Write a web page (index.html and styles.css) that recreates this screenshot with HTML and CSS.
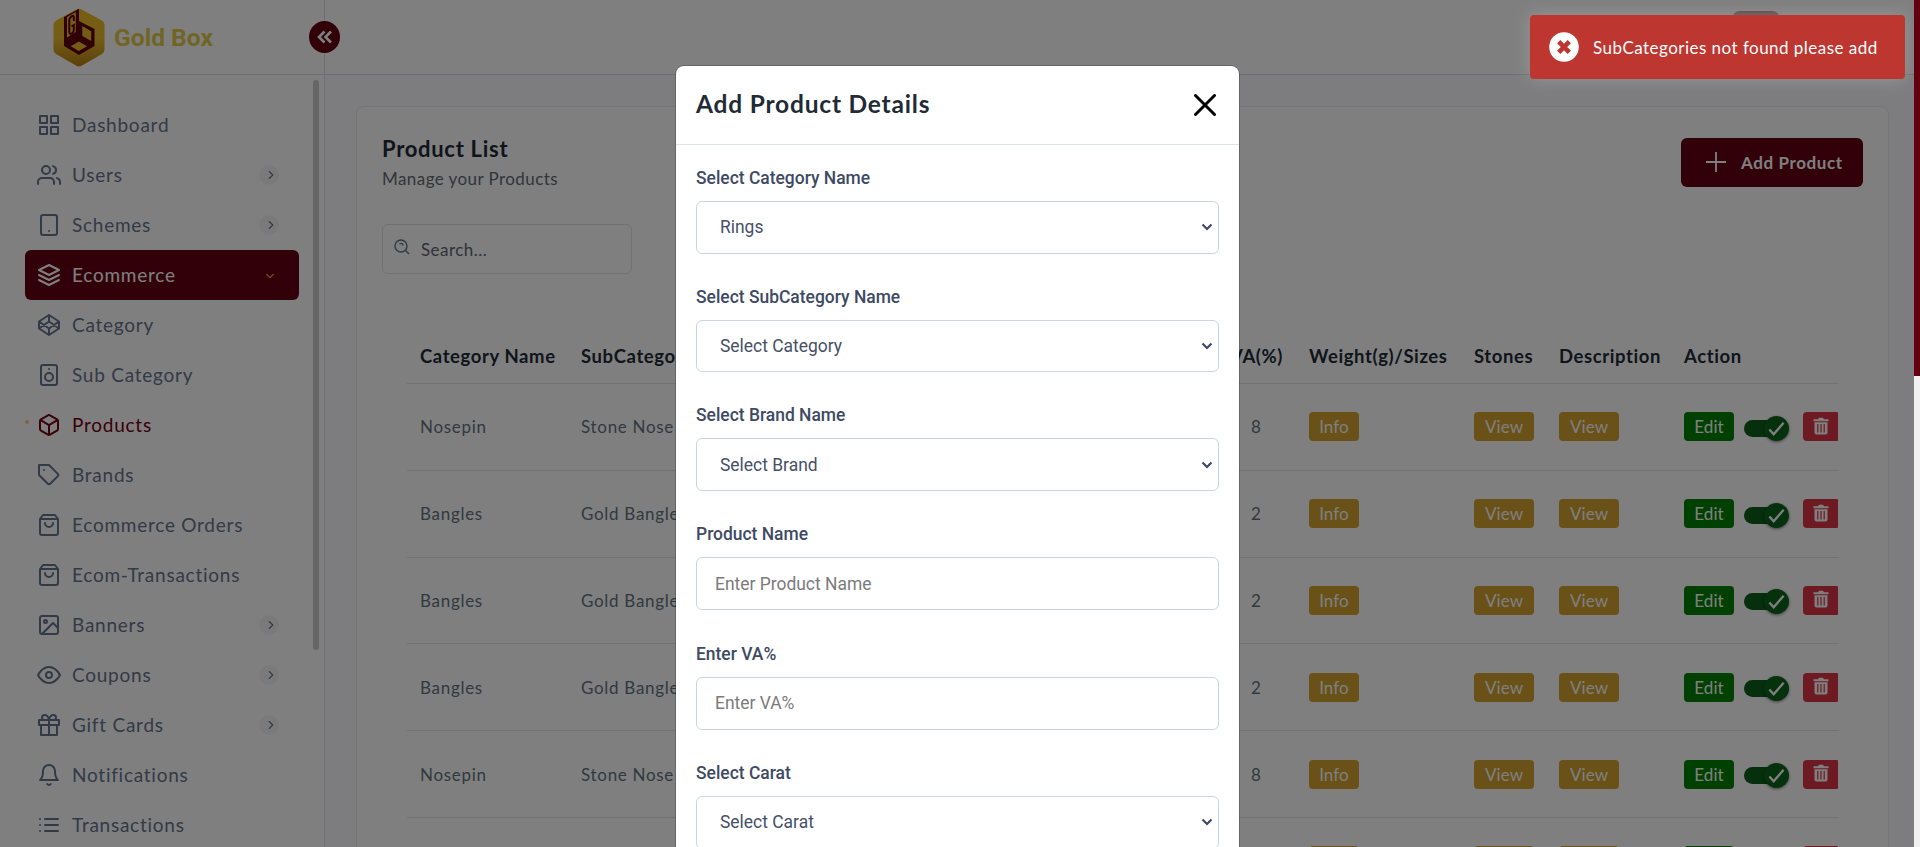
FILE: index.html
```html
<!DOCTYPE html>
<html lang="en">
<head>
<meta charset="utf-8">
<title>Gold Box - Products</title>
<link rel="stylesheet" href="styles.css">
</head>
<body>
<div class="app">
  <div class="viewport">
    <aside class="sidebar">
      <div class="brand">
        <svg class="brand-mark" viewBox="0 0 52 58">
          <defs><linearGradient id="gold" x1="0" y1="0" x2="0" y2="1"><stop offset="0" stop-color="#f0ba20"/><stop offset=".5" stop-color="#e8bc30"/><stop offset="1" stop-color="#b98010"/></linearGradient></defs>
          <path d="M23 1.2Q26 -.6 29 1.2L49 12Q51.500 13.500 51.500 16.500V41Q51.500 44 49 45.500L29 57Q26 58.800 23 57L3 45.500Q.5 44 .5 41V16.500Q.5 13.500 3 12Z" fill="url(#gold)"/>
          <path d="M11 8.500L26 .3V12.500L41.500 20.500V37.500L26 46.500L11 37.500Z" fill="#62000f"/>
          <path d="M14 8.500L22.800 3.500V23.500L14 29Z" fill="#ecba28"/>
          <path d="M20.800 12.500V9Q20.800 6.500 18.600 7.800Q16.300 9 16.300 11.500V23Q16.300 26.500 18.800 25Q20.800 24 20.800 21.500V16.500L18.500 18" stroke="#62000f" stroke-width="2" fill="none"/>
          <path d="M29.300 17.500L38.200 22.800V32.500L29.300 27.500ZM25.800 33L34 37.800L25.800 42.500L17.800 37.800Z" fill="#e8b82c"/>
        </svg>
        <span class="brand-name">Gold Box</span>
      </div>
      <nav class="menu" id="menu"></nav>
      <span class="side-thumb"></span>
      <span class="collapse"><svg viewBox="0 0 16 14"><path d="M7.500 1.500L2 7L7.500 12.500M14 1.500L8.500 7L14 12.500"/></svg></span>
    </aside>
    <div class="main">
      <header class="topbar"><span class="avatar"></span></header>
      <main class="content">
        <section class="card">
          <div class="card-head">
            <div>
              <h1 class="title">Product List</h1>
              <p class="subtitle">Manage your Products</p>
            </div>
            <button class="add"><svg viewBox="0 0 20 20"><path d="M10 0V20M0 10H20"/></svg><span>Add Product</span></button>
          </div>
          <div class="search">
            <svg viewBox="0 0 16 16"><circle cx="7" cy="7" r="6"/><path d="M11.300 11.300L15 15M5.500 4.800Q8.500 3.500 9.300 6.500"/></svg>
            <span>Search...</span>
          </div>
          <div class="table" id="table">
            <div class="row head"><span>Category Name</span><span>SubCategory</span><span class="va">VA(%)</span><span class="weight">Weight(g)/Sizes</span><span>Stones</span><span>Description</span><span>Action</span></div>
          </div>
        </section>
      </main>
    </div>
    <div class="backdrop"></div>
    <div class="modal">
      <div class="modal-head">
        <h2 class="modal-title">Add Product Details</h2>
        <svg class="close" viewBox="0 0 22 22"><path d="M1.500 1.500L20.500 20.500M20.500 1.500L1.500 20.500"/></svg>
      </div>
      <div class="modal-body" id="form"></div>
    </div>
    <div class="toast">
      <svg viewBox="0 0 30 30"><circle cx="15" cy="15" r="14.800" fill="#fff"/><path d="M9.700 9.700L20.300 20.300M20.300 9.700L9.700 20.300" stroke="#bd362f" stroke-width="4.600"/></svg>
      <span>SubCategories not found please add</span>
    </div>
  </div>
  <div class="scrollbar"><span class="scroll-thumb"></span></div>
</div>
<script src="app.js"></script>
</body>
</html>
```
FILE: styles.css
```css
* { box-sizing: border-box; }
body { margin: 0; font-family: Lato, "Open Sans", sans-serif; }
h1, h2, p { margin: 0; }
.app { display: flex; width: 100vw; height: 847px; overflow: hidden; }
.viewport { position: relative; display: flex; flex: 1; min-width: 0; overflow: hidden; background: #fff; }
.sidebar { position: relative; width: 325px; flex: none; border-right: 1px solid #dcdfe4; background: #fff; }
.brand { display: flex; align-items: center; gap: 9px; height: 75px; padding: 1px 0 0 53px; border-bottom: 1px solid #dcdde0; }
.brand-mark { width: 52px; height: 59px; }
.brand-name { font: 700 24.6px/30px Roboto, sans-serif; color: #e2cb4a; }
.menu { padding: 25px 25px 0; }
.item { display: flex; align-items: center; height: 50px; padding: 0 20px 0 12px; border-radius: 6px; color: #67748e; font-size: 19px; letter-spacing: .75px; white-space: nowrap; }
.item > span:not(.chev) { padding-bottom: 2px; }
.item svg { width: 24px; height: 24px; margin-right: 11px; fill: none; stroke: currentColor; stroke-width: 2; stroke-linecap: round; stroke-linejoin: round; }
.item .chev { display: flex; align-items: center; justify-content: center; width: 20px; height: 20px; margin-left: auto; border-radius: 50%; background: #f5f5f6; }
.item .chev svg { width: 14px; height: 14px; margin: -1px -4px 0 0; }
.item.open { background: #620010; color: #fff; }
.item.open .chev { background: none; color: #f09032; }
.item.open .chev svg { margin: 1px -2px 0 0; transform: rotate(90deg); }
.item.current { position: relative; color: #720014; }
.item.current::before { content: ""; position: absolute; left: 0; top: 20px; width: 4px; height: 4px; border-radius: 50%; background: #ffc38b; }
.side-thumb { position: absolute; left: 313px; top: 80px; width: 6px; height: 570px; border-radius: 3px; background: #ccc; }
.collapse { position: absolute; z-index: 2; left: 309px; top: 21px; width: 31px; height: 32px; border-radius: 50%; background: #620010; display: flex; align-items: center; justify-content: center; }
.collapse svg { width: 16px; height: 14px; fill: none; stroke: #fff; stroke-width: 2.600; }
.main { display: flex; flex-direction: column; flex: 1; min-width: 0; }
.topbar { display: flex; justify-content: flex-end; height: 75px; flex: none; padding: 11px 134px 0 0; border-bottom: 1px solid #dcdde0; }
.avatar { width: 48px; height: 48px; border-radius: 8px; background: #a0666e; }
.content { flex: 1; padding: 31px 25px 0 31px; background: #fafafe; }
.card { height: 800px; padding: 31px 25px 0; border: 1px solid #e8ebed; border-radius: 8px; background: #fff; }
.card-head { display: flex; justify-content: space-between; height: 86px; }
.title { margin-top: -2px; font-size: 22px; line-height: 26px; font-weight: 700; letter-spacing: .7px; color: #212b36; }
.subtitle { margin-top: 6px; font-size: 17px; line-height: 22px; letter-spacing: .43px; color: #646b72; }
.add { display: flex; align-items: center; gap: 15px; width: 182px; height: 49px; padding: 0 0 1px 25px; border: 0; border-radius: 6px; background: #620010; color: #fff; font: 700 17px Lato, sans-serif; letter-spacing: .6px; white-space: nowrap; }
.add svg { width: 20px; height: 20px; flex: none; fill: none; stroke: #fff; stroke-width: 1.800; }
.search { display: flex; align-items: center; gap: 11px; width: 250px; height: 50px; padding: 0 11px; border: 1px solid #dfe2e6; border-radius: 6px; color: #5b6670; font-size: 17px; letter-spacing: .45px; }
.search svg { width: 16px; height: 16px; margin-top: -4px; fill: none; stroke: #637381; stroke-width: 1.400; }
.table { margin: 54px 24px 0 25px; }
.row { display: grid; grid-template-columns: 161px 655px 73px 165px 85px 125px 1fr; align-items: center; height: 86.800px; padding-left: 13px; border-bottom: 1px solid #e3e6e9; color: #637381; font-size: 17px; letter-spacing: .7px; white-space: nowrap; }
.row.head { height: 56px; color: #212b36; font-size: 18.500px; font-weight: 700; letter-spacing: .6px; }
.va { margin-left: -6px; }
.row:not(.head) .va { margin: 0; padding-left: 15px; }
.tag { display: inline-flex; align-items: center; justify-content: center; width: 60px; height: 29px; border-radius: 4px; background: #d2a22f; color: #fff; letter-spacing: .1px; }
.tag.info { width: 50px; }
.actions { display: flex; align-items: center; }
.edit { width: 50px; background: #008000; }
.toggle { display: flex; align-items: center; justify-content: flex-end; width: 35px; height: 17px; margin: 3px 24px 0 10px; border-radius: 9px; background: #0b5f1b; }
.knob { display: flex; align-items: center; justify-content: center; flex: none; width: 25px; height: 25px; margin-right: -10px; border-radius: 50%; background: #0b651b; box-shadow: 0 1px 3px rgba(0,0,0,.5); }
.knob svg { width: 19px; height: 19px; fill: none; stroke: #fff; stroke-width: 2.400; }
.del { display: flex; align-items: center; justify-content: center; width: 35px; height: 29px; border-radius: 4px 1px 1px 4px; background: #dc3545; }
.del svg { width: 16px; height: 18px; margin-top: -2px; }
.backdrop { position: absolute; z-index: 3; inset: 0; background: rgba(0,0,0,.5); }
.modal { position: absolute; z-index: 4; left: 676px; top: 66px; width: 563px; height: 900px; border-radius: 8px; background: #fff; box-shadow: 0 0 0 1px rgba(0,0,0,.2); }
.modal-head { display: flex; align-items: center; justify-content: space-between; height: 79px; padding: 0 23px 2px 20px; border-bottom: 1px solid #dee2ea; }
.modal-title { font-size: 24.500px; line-height: 30px; font-weight: 700; letter-spacing: .8px; color: #212b36; }
.close { width: 22px; height: 22px; margin-top: 1px; fill: none; stroke: #000; stroke-width: 3; stroke-linecap: round; }
.modal-body { padding: 20px 20px 0; font-family: Roboto, sans-serif; }
.field { height: 118.700px; }
.field-text { height: 119.500px; }
.label { font-size: 17.450px; line-height: 26px; font-weight: 500; color: #3e4a63; }
.control { display: flex; align-items: center; justify-content: space-between; height: 52.500px; margin-top: 10px; padding: 0 5px 0 23px; border: 1px solid #cbd5e1; border-radius: 6px; color: #475069; font-size: 17.450px; }
.field-text .control { height: 53px; padding-left: 18px; color: #7b7b7b; }
.control svg { width: 12px; height: 8px; fill: none; stroke: #3e4a63; stroke-width: 2.200; }
.toast { position: absolute; z-index: 5; left: 1530px; top: 15px; width: 375px; height: 64px; display: flex; align-items: center; gap: 14px; padding: 0 0 0 19px; border-radius: 4px; background: #bd362f; box-shadow: 0 0 18px #999; color: #fff; font-size: 17px; letter-spacing: .47px; white-space: nowrap; }
.toast svg { width: 30px; height: 30px; }
.scrollbar { width: 6px; flex: none; background: #f1f1f1; }
.scroll-thumb { display: block; height: 376px; background: #620010; }
```
FILE: app.js
```js
const icons = {
  grid: '<path d="M3 3h7v7H3zM14 3h7v7h-7zM14 14h7v7h-7zM3 14h7v7H3z"/>',
  users: '<path d="M17 21v-2a4 4 0 0 0-4-4H5a4 4 0 0 0-4 4v2"/><circle cx="9" cy="7" r="4"/><path d="M23 21v-2a4 4 0 0 0-3-3.870M16 3.130a4 4 0 0 1 0 7.750"/>',
  tablet: '<rect x="4" y="2" width="16" height="20" rx="2"/><path d="M12 18h.01"/>',
  layers: '<path d="M12 2L2 7l10 5 10-5zM2 17l10 5 10-5M2 12l10 5 10-5"/>',
  codepen: '<path d="M12 2l10 6.500v7L12 22 2 15.500v-7zM12 22v-6.500M22 8.500l-10 7-10-7M2 15.500l10-7 10 7M12 2v6.500"/>',
  speaker: '<rect x="4" y="2" width="16" height="20" rx="2"/><circle cx="12" cy="14" r="4"/><path d="M12 6h.01"/>',
  box: '<path d="M21 16V8a2 2 0 0 0-1-1.730l-7-4a2 2 0 0 0-2 0l-7 4A2 2 0 0 0 3 8v8a2 2 0 0 0 1 1.730l7 4a2 2 0 0 0 2 0l7-4A2 2 0 0 0 21 16zM3.270 6.960L12 12.010l8.730-5.050M12 22.080V12"/>',
  tag: '<path d="M20.590 13.410l-7.170 7.170a2 2 0 0 1-2.830 0L2 12V2h10l8.590 8.590a2 2 0 0 1 0 2.820zM7 7h.01"/>',
  bag: '<path d="M6 2L3 6v14a2 2 0 0 0 2 2h14a2 2 0 0 0 2-2V6l-3-4zM3 6h18M16 10a4 4 0 0 1-8 0"/>',
  image: '<rect x="3" y="3" width="18" height="18" rx="2"/><circle cx="8.500" cy="8.500" r="1.500"/><path d="M21 15l-5-5L5 21"/>',
  eye: '<path d="M1 12s4-8 11-8 11 8 11 8-4 8-11 8-11-8-11-8z"/><circle cx="12" cy="12" r="3"/>',
  gift: '<path d="M20 12v10H4V12M2 7h20v5H2zM12 22V7M12 7H7.500a2.500 2.500 0 0 1 0-5C11 2 12 7 12 7zM12 7h4.500a2.500 2.500 0 0 0 0-5C13 2 12 7 12 7z"/>',
  bell: '<path d="M18 8A6 6 0 0 0 6 8c0 7-3 9-3 9h18s-3-2-3-9M13.730 21a2 2 0 0 1-3.460 0"/>',
  list: '<path d="M8 6h13M8 12h13M8 18h13M3 6h.01M3 12h.01M3 18h.01"/>'
};
const chevron = '<span class="chev"><svg viewBox="0 0 24 24"><path d="M9 18l6-6-6-6"/></svg></span>';
const menu = [
  ['grid', 'Dashboard'], ['users', 'Users', 1], ['tablet', 'Schemes', 1], ['layers', 'Ecommerce', 1, 'open'],
  ['codepen', 'Category'], ['speaker', 'Sub Category'], ['box', 'Products', 0, 'current'], ['tag', 'Brands'],
  ['bag', 'Ecommerce Orders'], ['bag', 'Ecom-Transactions'], ['image', 'Banners', 1], ['eye', 'Coupons', 1],
  ['gift', 'Gift Cards', 1], ['bell', 'Notifications'], ['list', 'Transactions']
];
document.getElementById('menu').innerHTML = menu.map(([icon, text, more, state]) =>
  `<div class="item ${state || ''}"><svg viewBox="0 0 24 24">${icons[icon]}</svg><span>${text}</span>${more ? chevron : ''}</div>`).join('');

const rows = [['Nosepin', 'Stone Nose Pin', 8], ['Bangles', 'Gold Bangles', 2], ['Bangles', 'Gold Bangles', 2],
  ['Bangles', 'Gold Bangles', 2], ['Nosepin', 'Stone Nose Pin', 8], ['Nosepin', 'Stone Nose Pin', 8]];
document.getElementById('table').insertAdjacentHTML('beforeend', rows.map(([cat, sub, va]) =>
  `<div class="row"><span>${cat}</span><span>${sub}</span><span class="va">${va}</span>
  <span><span class="tag info">Info</span></span><span><span class="tag">View</span></span><span><span class="tag">View</span></span>
  <span class="actions"><span class="tag edit">Edit</span><span class="toggle"><span class="knob"><svg viewBox="0 0 20 20"><path d="M2.500 11L7 16L17.500 4"/></svg></span></span>
  <span class="del"><svg viewBox="0 0 16 18"><path d="M.5 2.200h4.500L6 .8h4l1 1.400h4.500v2H.5z" fill="#fff"/><path d="M1.500 5.300h13V15.500q0 2-2 2h-9q-2 0-2-2z" fill="#fff"/><path d="M4.800 7v8.500M8 7v8.500M11.200 7v8.500" stroke="#dc3545" stroke-width="1.200"/></svg></span></span></div>`).join(''));

const fields = [['Select Category Name', 'Rings', 1], ['Select SubCategory Name', 'Select Category', 1], ['Select Brand Name', 'Select Brand', 1],
  ['Product Name', 'Enter Product Name'], ['Enter VA%', 'Enter VA%'], ['Select Carat', 'Select Carat', 1]];
document.getElementById('form').innerHTML = fields.map(([label, value, select]) =>
  `<div class="field ${select ? '' : 'field-text'}"><div class="label">${label}</div><div class="control"><span>${value}</span>${select ? '<svg viewBox="0 0 12 8"><path d="M1.500 1.500L6 6L10.500 1.500"/></svg>' : ''}</div></div>`).join('');
```
